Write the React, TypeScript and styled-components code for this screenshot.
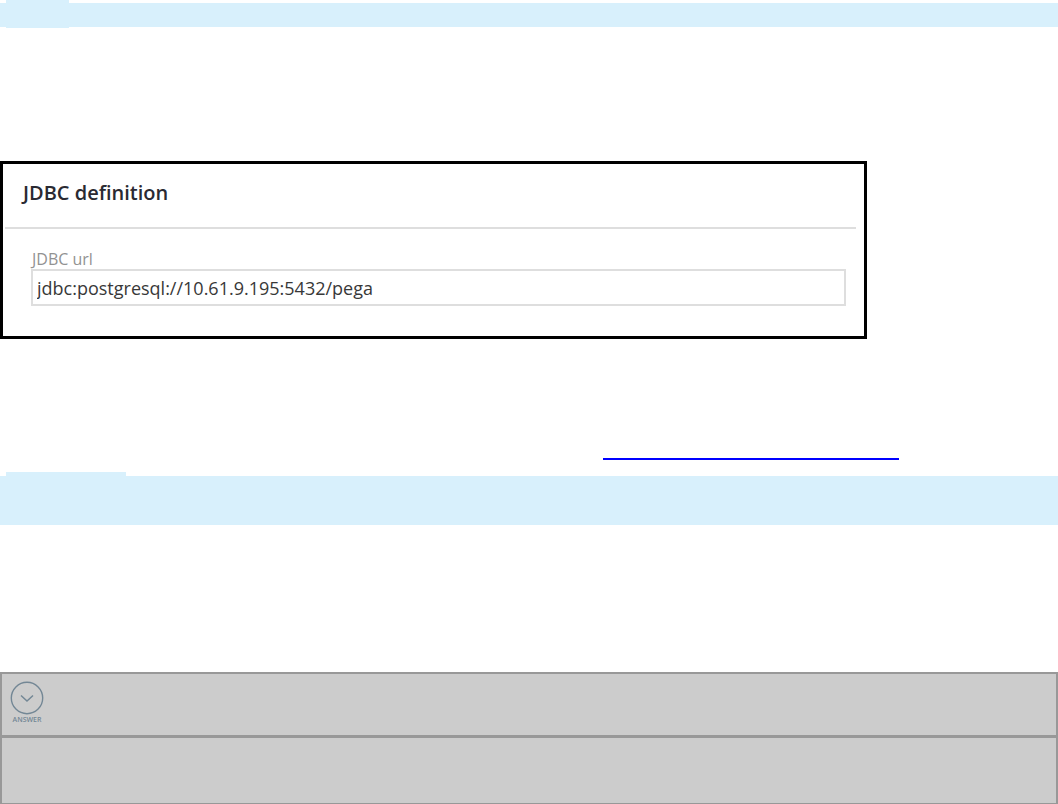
import React from "react";
import styled, { createGlobalStyle } from "styled-components";

const GlobalStyle = createGlobalStyle`
  *, *::before, *::after { box-sizing: border-box; }
  body { margin: 0; background: #fff; overflow-x: hidden; }
`;

const Page = styled.main`
  display: flex;
  flex-direction: column;
  padding-top: 3px;
  font-family: "Open Sans", "Noto Sans", sans-serif;
`;

const Band = styled.div<{ $lines: number }>`
  position: relative;
  height: ${(p) => (p.$lines === 1 ? 24 : 49)}px;
  background: #d8f0fc;
`;

const BandLabel = styled.span<{ $width: number; $rise: number }>`
  position: absolute;
  left: 6px;
  top: -${(p) => p.$rise}px;
  width: ${(p) => p.$width}px;
  height: 28px;
  background: #d8f0fc;
`;

const Panel = styled.section`
  width: 100%;
  max-width: 867px;
  margin-top: 134px;
  padding: 0 8px 30px 2px;
  border: 3px solid #000;
`;

const PanelTitle = styled.h2`
  margin: 0;
  padding: 14px 18px 19px;
  border-bottom: 2px solid #dedede;
  color: #2a2a32;
  font-size: 20px;
  line-height: 30px;
  font-weight: 600;
`;

const Field = styled.div`
  display: flex;
  flex-direction: column;
  padding: 20px 10px 0 26px;
`;

const FieldLabel = styled.label`
  padding-left: 1px;
  color: #929292;
  font-size: 16px;
  line-height: 20px;
`;

const FieldInput = styled.input`
  width: 100%;
  height: 37px;
  padding: 0 4px;
  border: 2px solid #dedede;
  border-radius: 0;
  background: #fff;
  color: #383838;
  font-family: inherit;
  font-size: 18px;
`;

const LinkLine = styled.p`
  display: flex;
  justify-content: center;
  margin: 96px 0 16px;
  padding-left: 444px;
`;

const LinkUnderline = styled.a`
  width: 296px;
  height: 25px;
  border-bottom: 2px solid #00f;
`;

const AnswerTable = styled.table`
  width: 100%;
  margin-top: 147px;
  border-collapse: separate;
  border-spacing: 0;
  border: 2px solid #989898;
  border-bottom-width: 1px;
  background: #ccc;
`;

const AnswerCell = styled.td<{ $first?: boolean }>`
  height: ${(p) => (p.$first ? 64 : 65)}px;
  padding: ${(p) => (p.$first ? "7px 8px 0" : "0")};
  border-bottom: ${(p) => (p.$first ? "3px solid #989898" : "0")};
  vertical-align: top;
`;

const AnswerButton = styled.button`
  display: flex;
  flex-direction: column;
  align-items: center;
  width: 34px;
  padding: 0;
  border: 0;
  background: none;
  color: #738795;
  font-family: inherit;
  font-size: 7px;
  line-height: 10px;
  font-weight: 600;
`;

export default function App() {
  return (
    <>
      <GlobalStyle />
      <Page>
        <Band $lines={1}>
          <BandLabel $width={63} $rise={3} />
        </Band>
        <Panel>
          <PanelTitle>JDBC definition</PanelTitle>
          <Field>
            <FieldLabel htmlFor="jdbc-url">JDBC url</FieldLabel>
            <FieldInput
              id="jdbc-url"
              type="text"
              defaultValue="jdbc:postgresql://10.61.9.195:5432/pega"
            />
          </Field>
        </Panel>
        <LinkLine>
          <LinkUnderline href="#" />
        </LinkLine>
        <Band $lines={2}>
          <BandLabel $width={120} $rise={4} />
        </Band>
        <AnswerTable>
          <tbody>
            <tr>
              <AnswerCell $first>
                <AnswerButton type="button">
                  <svg width="34" height="34" viewBox="0 0 34 34" fill="none" stroke="currentColor" aria-hidden="true">
                    <circle cx="17" cy="17" r="15.7" strokeWidth="1.4" />
                    <path d="M11 14.5 17 20 23 14.5" strokeWidth="1.5" />
                  </svg>
                  ANSWER
                </AnswerButton>
              </AnswerCell>
            </tr>
            <tr>
              <AnswerCell />
            </tr>
          </tbody>
        </AnswerTable>
      </Page>
    </>
  );
}
